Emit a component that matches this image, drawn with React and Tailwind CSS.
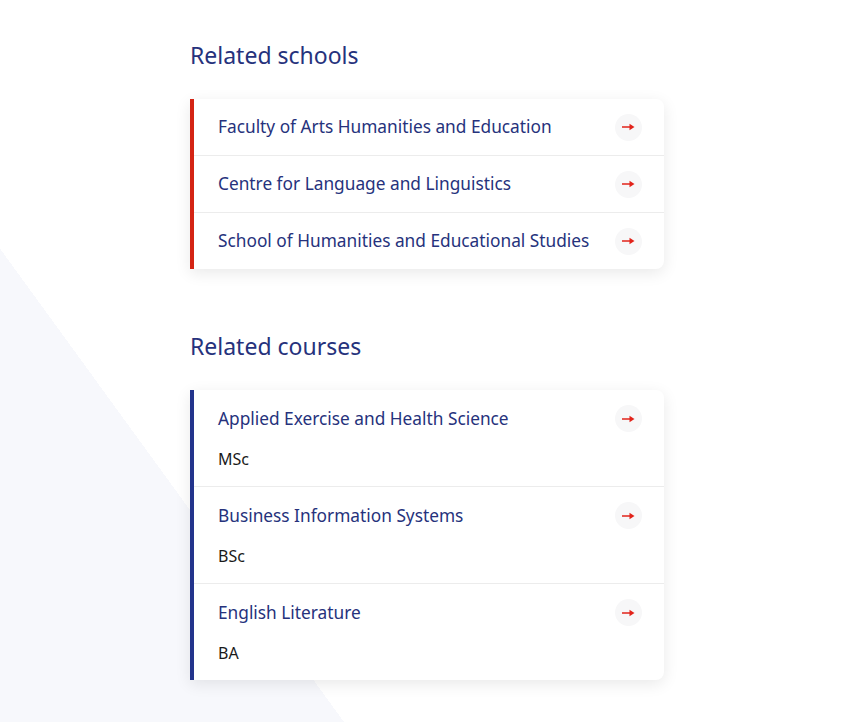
import React from "react";

const schools = [
  "Faculty of Arts Humanities and Education",
  "Centre for Language and Linguistics",
  "School of Humanities and Educational Studies",
];

const courses = [
  { title: "Applied Exercise and Health Science", award: "MSc" },
  { title: "Business Information Systems", award: "BSc" },
  { title: "English Literature", award: "BA" },
];

function Arrow() {
  return (
    <span className="flex h-[27px] w-[27px] shrink-0 items-center justify-center rounded-full bg-[#f7f7f8]">
      <svg width="13" height="8" viewBox="0 0 13 8" aria-hidden="true">
        <path d="M0 4h8.5" stroke="#e2231a" strokeWidth="1.6" />
        <path d="M7.5 0.8L12.5 4 7.5 7.2z" fill="#e2231a" />
      </svg>
    </span>
  );
}

export default function App() {
  return (
    <div
      className="min-h-screen h-[722px] w-full bg-[linear-gradient(234deg,#ffffff_837px,#f7f8fc_837px)] text-[#25317a]"
      style={{ fontFamily: '"Noto Sans", "Open Sans", Arial, sans-serif' }}
    >
      <div className="ml-[190px] w-[474px] pt-[40px]">
        <h2 className="text-[23px] leading-[31px] text-[#26327c]">Related schools</h2>

        <ul className="mt-[28px] overflow-hidden rounded-r-[8px] border-l-4 border-[#d42414] bg-white shadow-[0_4px_16px_rgba(0,0,0,0.09)]">
          {schools.map((s, i) => (
            <li
              key={s}
              className={`flex items-center justify-between pl-[24px] pr-[22px] ${
                i > 0 ? "h-[57px] border-t border-[#ececec]" : "h-[56px]"
              }`}
            >
              <span className="text-[17.3px] text-[#26327c]">{s}</span>
              <Arrow />
            </li>
          ))}
        </ul>

        <h2 className="mt-[62px] text-[23px] leading-[31px] text-[#26327c]">Related courses</h2>

        <ul className="mt-[28px] overflow-hidden rounded-r-[8px] border-l-4 border-[#23348c] bg-white shadow-[0_4px_16px_rgba(0,0,0,0.09)]">
          {courses.map((c, i) => (
            <li
              key={c.title}
              className={`flex flex-col pl-[24px] pr-[22px] ${
                i > 0 ? "h-[97px] border-t border-[#ececec] pt-[15px]" : "h-[96px] pt-[15px]"
              }`}
            >
              <div className="flex items-center justify-between">
                <span className="text-[17.3px] leading-[26px] text-[#26327c]">{c.title}</span>
                <Arrow />
              </div>
              <span className="mt-[17px] text-[16px] leading-[20px] text-[#1a1a1a]">{c.award}</span>
            </li>
          ))}
        </ul>
      </div>
    </div>
  );
}
